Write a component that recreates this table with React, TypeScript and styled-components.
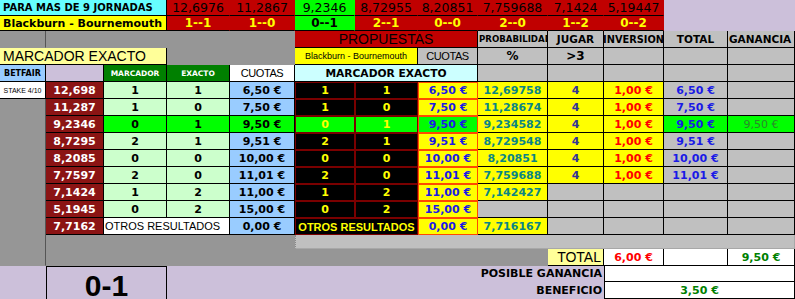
import { Fragment } from "react";
import styled, { createGlobalStyle } from "styled-components";

const GlobalStyle = createGlobalStyle`
  body {
    margin: 0;
    background: #969696;
  }
`;

const C = {
  gray: "#969696",
  light: "#c0c0c0",
  lav: "#ccc0da",
  cyan: "#66ffff",
  red: "#c00000",
  yellow: "#ffff00",
  pale: "#ffff99",
  sky: "#99ccff",
  green: "#008000",
  mint: "#ccffcc",
  wine: "#8b1414",
  lime: "#00ff00",
  ice: "#ccffff",
  blue: "#1a1ae6",
  teal: "#0a8585",
  navy: "#333399",
};

const Sheet = styled.div`
  display: grid;
  grid-template-columns: 46px 58px 63px 63px 65px 60px 63px 60px 70px 56px 60px 64px 67px;
  grid-template-rows: 16px 15px 17px 17px 17px repeat(9, 17px) 14px 17px 16px 17px;
  width: 795px;
  height: 299px;
  background: ${C.gray};
`;

type CellProps = {
  $bg?: string;
  $fg?: string;
  $size?: number;
  $bold?: boolean;
  $sans?: boolean;
  $align?: "left" | "center" | "right";
  $line?: string;
  $span?: number;
  $rows?: number;
  $pad?: number;
};

const Cell = styled.div<CellProps>`
  grid-column: span ${(p) => p.$span ?? 1};
  grid-row: span ${(p) => p.$rows ?? 1};
  box-sizing: border-box;
  min-width: 0;
  min-height: 0;
  display: flex;
  align-items: center;
  justify-content: ${(p) =>
    p.$align === "left" ? "flex-start" : p.$align === "right" ? "flex-end" : "center"};
  padding: 0 ${(p) => p.$pad ?? 2}px;
  background: ${(p) => p.$bg ?? C.light};
  color: ${(p) => p.$fg ?? "#000"};
  font-family: ${(p) =>
    p.$sans ? '"Liberation Sans", Arial, sans-serif' : '"DejaVu Sans", Verdana, sans-serif'};
  font-size: ${(p) => p.$size ?? 11}px;
  font-weight: ${(p) => (p.$bold ? 700 : 400)};
  border-right: 1px solid ${(p) => p.$line ?? "#000"};
  border-bottom: 1px solid ${(p) => p.$line ?? "#000"};
  white-space: nowrap;
  overflow: hidden;
  line-height: normal;
`;

// filler areas of the sheet, no grid lines
const Blank = styled(Cell)`
  border-color: transparent;
`;

const TopValue = styled(Cell)`
  border-right-color: ${(p) => p.$bg ?? C.red};
  font-size: 12.5px;
`;

const TopScore = styled(Cell)`
  border-right-color: ${(p) => p.$bg ?? C.red};
  font-size: 12px;
  font-weight: 700;
`;

const Banner = styled(Cell)`
  background: ${C.red};
  padding-top: 1px;
`;

const BannerText = styled.span`
  font-family: "Liberation Sans", Arial, sans-serif;
  font-size: 14px;
  line-height: 15px;
  color: #000;
`;

const Odds = styled(Cell)`
  background: ${C.wine};
  color: #fff;
  font-weight: 700;
  border-right-color: #000;
`;

const Pick = styled(Cell)`
  color: ${C.yellow};
  font-weight: 700;
  border: 1px solid #7a0000;
`;

const Offer = styled(Cell)`
  color: ${C.blue};
  font-weight: 700;
  border: 1px solid #ff4a00;
`;

const Header = styled(Cell)`
  font-weight: 700;
  font-size: ${(p) => p.$size ?? 10.5}px;
`;

const Result = styled(Cell)`
  font-family: "Liberation Sans", Arial, sans-serif;
  font-size: 30px;
  font-weight: 700;
  line-height: 1;
  border: 1px solid #000;
  border-bottom: none;
  padding-top: 5px;
`;

type Row = {
  odds: string;
  home: string;
  away: string;
  quote: string;
  prob: string;
  bet?: boolean;
  win?: boolean;
};

const top: { value: string; score: string; win?: boolean }[] = [
  { value: "12,6976", score: "1--1" },
  { value: "11,2867", score: "1--0" },
  { value: "9,2346", score: "0--1", win: true },
  { value: "8,72955", score: "2--1" },
  { value: "8,20851", score: "0--0" },
  { value: "7,759688", score: "2--0" },
  { value: "7,1424", score: "1--2" },
  { value: "5,19447", score: "0--2" },
];

const rows: Row[] = [
  { odds: "12,698", home: "1", away: "1", quote: "6,50 €", prob: "12,69758", bet: true },
  { odds: "11,287", home: "1", away: "0", quote: "7,50 €", prob: "11,28674", bet: true },
  { odds: "9,2346", home: "0", away: "1", quote: "9,50 €", prob: "9,234582", bet: true, win: true },
  { odds: "8,7295", home: "2", away: "1", quote: "9,51 €", prob: "8,729548", bet: true },
  { odds: "8,2085", home: "0", away: "0", quote: "10,00 €", prob: "8,20851", bet: true },
  { odds: "7,7597", home: "2", away: "0", quote: "11,01 €", prob: "7,759688", bet: true },
  { odds: "7,1424", home: "1", away: "2", quote: "11,00 €", prob: "7,142427" },
  { odds: "5,1945", home: "0", away: "2", quote: "15,00 €", prob: "" },
];

function DataRow({ row }: { row: Row }) {
  const { win } = row;
  return (
    <>
      <Odds>{row.odds}</Odds>
      <Cell $bg={win ? C.lime : C.mint} $bold>{row.home}</Cell>
      <Cell $bg={win ? C.lime : C.mint} $bold>{row.away}</Cell>
      <Cell $bg={win ? C.lime : C.sky} $bold>{row.quote}</Cell>
      <Pick $bg={win ? C.lime : "#000"}>{row.home}</Pick>
      <Pick $bg={win ? C.lime : "#000"}>{row.away}</Pick>
      <Offer $bg={win ? C.lime : C.yellow}>{row.quote}</Offer>
      {row.prob ? (
        <Cell $bg={C.yellow} $fg={C.teal} $bold>{row.prob}</Cell>
      ) : (
        <Cell />
      )}
      {row.bet ? (
        <>
          <Cell $bg={C.yellow} $fg={C.navy} $bold>4</Cell>
          <Cell $bg={C.yellow} $fg="#ff0000" $bold>1,00 €</Cell>
          <Cell $bg={win ? C.lime : C.light} $fg={C.blue} $bold>{row.quote}</Cell>
          <Cell $bg={win ? C.lime : C.light} $fg="#2a8a2a">{win ? row.quote : ""}</Cell>
        </>
      ) : (
        <>
          <Cell />
          <Cell />
          <Cell />
          <Cell />
        </>
      )}
    </>
  );
}

export default function App() {
  return (
    <>
      <GlobalStyle />
      <Sheet>
        {/* row 1 */}
        <Cell $span={3} $bg={C.cyan} $bold $size={10} $align="left" $pad={3}>
          PARA MAS DE 9 JORNADAS
        </Cell>
        {top.map((t) => (
          <TopValue key={t.value} $bg={t.win ? C.lime : C.red}>{t.value}</TopValue>
        ))}
        <Cell $span={2} $rows={2} $bg={C.lav} $line={C.lav} />

        {/* row 2 */}
        <Cell $span={3} $bg={C.yellow} $bold $size={11} $align="left" $pad={3}>
          Blackburn - Bournemouth
        </Cell>
        {top.map((t) => (
          <TopScore key={t.score} $bg={t.win ? C.lime : C.red} $fg={t.win ? "#000" : C.yellow}>
            {t.score}
          </TopScore>
        ))}

        {/* row 3 */}
        <Blank $bg={C.gray} style={{ borderRightColor: "#555" }} />
        <Blank $span={4} $bg={C.gray} />
        <Banner $span={3}>
          <BannerText>PROPUESTAS</BannerText>
        </Banner>
        <Header $size={8.6} $align="left" $pad={1}>PROBABILIDAD</Header>
        <Header>JUGAR</Header>
        <Header $size={9.8}>INVERSION</Header>
        <Header>TOTAL</Header>
        <Header $align="left" $pad={1}>GANANCIA</Header>

        {/* row 4 */}
        <Cell $span={3} $bg={C.pale} $sans $size={14} $align="left" $pad={3}>
          MARCADOR EXACTO
        </Cell>
        <Blank $span={2} $bg={C.gray} />
        <Cell $span={2} $bg={C.yellow} $sans $size={9}>Blackburn - Bournemouth</Cell>
        <Cell $sans $size={11} style={{ letterSpacing: "-0.4px" }}>CUOTAS</Cell>
        <Header $size={12}>%</Header>
        <Header $size={12}>&gt;3</Header>
        <Cell />
        <Cell />
        <Cell />

        {/* row 5 */}
        <Cell $bg={C.sky} $bold $size={8}>BETFAIR</Cell>
        <Cell $bg={C.lav} />
        <Cell $bg={C.green} $fg="#fff" $bold $size={7.5}>MARCADOR</Cell>
        <Cell $bg={C.green} $fg="#fff" $bold $size={7.5}>EXACTO</Cell>
        <Cell $bg="#fff" $sans $size={11} style={{ letterSpacing: "-0.4px" }}>CUOTAS</Cell>
        <Cell $span={3} $bg={C.ice} $bold $size={10.7}>MARCADOR EXACTO</Cell>
        <Cell />
        <Cell />
        <Cell />
        <Cell />
        <Cell />

        {/* data rows */}
        {rows.map((r, i) => (
          <Fragment key={r.odds}>
            {i === 0 && (
              <Cell $bg="#fff" $sans $size={7}>STAKE 4/10</Cell>
            )}
            {i === 1 && <Blank $rows={10} $bg={C.gray} style={{ borderRightColor: "#555" }} />}
            <DataRow row={r} />
          </Fragment>
        ))}

        {/* otros resultados */}
        <Odds>7,7162</Odds>
        <Cell $span={2} $bg="#fff" $sans $size={11} $align="left" $pad={1}>
          OTROS RESULTADOS
        </Cell>
        <Cell $bg={C.sky} $bold>0,00 €</Cell>
        <Pick $span={2} $bg="#000" $sans $size={11} $pad={1}>OTROS RESULTADOS</Pick>
        <Offer $bg={C.yellow}>0,00 €</Offer>
        <Cell $bg={C.yellow} $fg={C.teal} $bold>7,716167</Cell>
        <Cell />
        <Cell />
        <Cell />
        <Cell />

        {/* spacer row */}
        <Blank $span={4} $bg={C.gray} />
        <Cell $span={8} $line="#a8a8a8" style={{ borderLeft: "1px dotted #888" }} />

        {/* totals */}
        <Blank $span={8} $bg={C.gray} />
        <Cell $bg={C.pale} $sans $size={14} $align="right" $pad={2}>TOTAL</Cell>
        <Cell $bg="#fff" $fg="#ff0000" $bold>6,00 €</Cell>
        <Cell $bg="#fff" />
        <Cell $bg="#fff" $fg={C.green} $bold>9,50 €</Cell>

        {/* summary */}
        <Blank $rows={2} $bg={C.lav} />
        <Result $span={2} $rows={2} $bg={C.lav}>0-1</Result>
        <Blank $span={7} $bg={C.lav} $bold $align="right" $pad={1}>POSIBLE GANANCIA</Blank>
        <Cell $span={3} $bg="#fff" style={{ borderLeft: "1px solid #000" }} />
        <Blank $span={7} $bg={C.lav} $bold $align="right" $pad={1}>BENEFICIO</Blank>
        <Cell $span={3} $bg="#fff" $fg={C.green} $bold style={{ borderLeft: "1px solid #000" }}>
          3,50 €
        </Cell>
      </Sheet>
    </>
  );
}
